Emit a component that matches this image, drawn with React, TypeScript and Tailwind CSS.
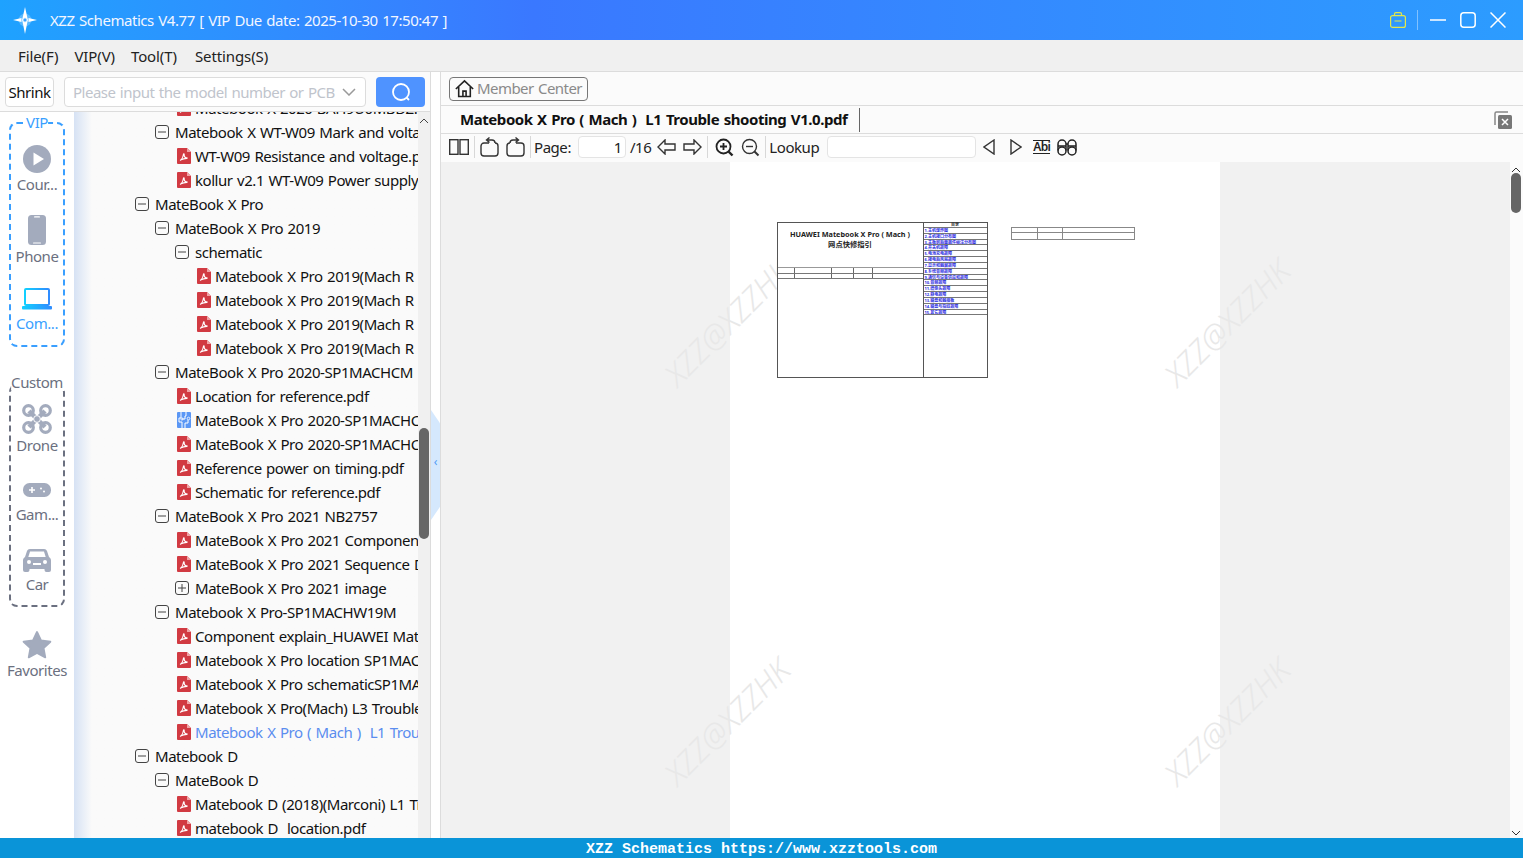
import type { ReactNode } from 'react'

const FONT = '[font-family:"Noto_Sans","Noto_Sans_CJK_SC",sans-serif]'

type TreeRow = {
  kind: 'minus' | 'plus' | 'pdf' | 'chip'
  indent: string
  label: string
  active?: boolean
}

// x offsets of the row icon, counted from the left edge of the tree
const L0 = 'pl-[61px]'
const L1 = 'pl-[81px]'
const L2 = 'pl-[101px]'
const F2 = 'pl-[103px]'
const F3 = 'pl-[123px]'

const rows: TreeRow[] = [
  { kind: 'pdf', indent: F2, label: 'Matebook X 2020-BAH9U0MBDZ.pdf' },
  { kind: 'minus', indent: L1, label: 'Matebook X WT-W09 Mark and voltage' },
  { kind: 'pdf', indent: F2, label: 'WT-W09 Resistance and voltage.pdf' },
  { kind: 'pdf', indent: F2, label: 'kollur v2.1 WT-W09 Power supply sequence.pdf' },
  { kind: 'minus', indent: L0, label: 'MateBook X Pro' },
  { kind: 'minus', indent: L1, label: 'MateBook X Pro 2019' },
  { kind: 'minus', indent: L2, label: 'schematic' },
  { kind: 'pdf', indent: F3, label: 'Matebook X Pro 2019(Mach R' },
  { kind: 'pdf', indent: F3, label: 'Matebook X Pro 2019(Mach R' },
  { kind: 'pdf', indent: F3, label: 'Matebook X Pro 2019(Mach R' },
  { kind: 'pdf', indent: F3, label: 'Matebook X Pro 2019(Mach R' },
  { kind: 'minus', indent: L1, label: 'MateBook X Pro 2020-SP1MACHCM' },
  { kind: 'pdf', indent: F2, label: 'Location for reference.pdf' },
  { kind: 'chip', indent: F2, label: 'MateBook X Pro 2020-SP1MACHCM' },
  { kind: 'pdf', indent: F2, label: 'MateBook X Pro 2020-SP1MACHCM' },
  { kind: 'pdf', indent: F2, label: 'Reference power on timing.pdf' },
  { kind: 'pdf', indent: F2, label: 'Schematic for reference.pdf' },
  { kind: 'minus', indent: L1, label: 'MateBook X Pro 2021 NB2757' },
  { kind: 'pdf', indent: F2, label: 'MateBook X Pro 2021 Component' },
  { kind: 'pdf', indent: F2, label: 'MateBook X Pro 2021 Sequence Diagram' },
  { kind: 'plus', indent: L2, label: 'MateBook X Pro 2021 image' },
  { kind: 'minus', indent: L1, label: 'Matebook X Pro-SP1MACHW19M' },
  { kind: 'pdf', indent: F2, label: 'Component explain_HUAWEI Matebook' },
  { kind: 'pdf', indent: F2, label: 'Matebook X Pro location SP1MACH' },
  { kind: 'pdf', indent: F2, label: 'Matebook X Pro schematicSP1MACH' },
  { kind: 'pdf', indent: F2, label: 'Matebook X Pro(Mach) L3 Trouble shooting' },
  { kind: 'pdf', indent: F2, label: 'Matebook X Pro ( Mach )  L1 Trouble shooting', active: true },
  { kind: 'minus', indent: L0, label: 'Matebook D' },
  { kind: 'minus', indent: L1, label: 'MateBook D' },
  { kind: 'pdf', indent: F2, label: 'Matebook D (2018)(Marconi) L1 Trouble' },
  { kind: 'pdf', indent: F2, label: 'matebook D  location.pdf' },
]

const tocItems = [
  '1.主机爆炸图',
  '2.主机接口分布图',
  '3.主板前后面器件标注分布图',
  '4.开关机故障',
  '5.电池充电故障',
  '6.接电后风扇故障',
  '7.显示和触屏故障',
  '8.系统音频故障',
  '9.通信与设备供应和故障',
  '10.音频故障',
  '11.摄像头故障',
  '12.静电故障',
  '13.键盘和触摸板',
  '14.键盘与指纹故障',
  '15.其它故障',
]

function PdfIcon() {
  return (
    <svg width="14" height="16" viewBox="0 0 14 16" className="shrink-0">
      <path d="M1 0h9l4 4v11a1 1 0 0 1-1 1H1a1 1 0 0 1-1-1V1a1 1 0 0 1 1-1z" fill="#d13a42" />
      <path d="M10 0l4 4h-4z" fill="#f0a3a6" />
      <path
        d="M3 12.5c1.6-.8 2.8-3 3.4-6 .2-1 .9-.8.8.2-.2 1.7 1 3.1 3.4 3.4M3.4 12c2-1 4.3-1.7 6.9-1.6"
        fill="none"
        stroke="#fff"
        strokeWidth="1.1"
      />
    </svg>
  )
}

function ChipIcon() {
  return (
    <svg width="14" height="16" viewBox="0 0 14 16" className="shrink-0">
      <rect width="14" height="16" rx="1" fill="#5b97f5" />
      <path d="M4 0v6H2v4h3v6M9 0v4h-1v3H5M8 16v-5h3V8" fill="none" stroke="#fff" strokeWidth="1" />
      <circle cx="11.5" cy="6.5" r="1.3" fill="none" stroke="#fff" strokeWidth="0.8" />
      <circle cx="5" cy="7" r="1.1" fill="none" stroke="#fff" strokeWidth="0.8" />
    </svg>
  )
}

function BoxIcon({ plus }: { plus?: boolean }) {
  return (
    <svg width="14" height="14" viewBox="0 0 14 14" className="shrink-0">
      <rect x="0.5" y="0.5" width="13" height="13" rx="2.5" fill="none" stroke="#444" />
      <path d={plus ? 'M3 7h8M7 3v8' : 'M3 7h8'} stroke="#444" />
    </svg>
  )
}

function Row({ row }: { row: TreeRow }) {
  const isFile = row.kind === 'pdf' || row.kind === 'chip'
  return (
    <div className={`flex h-6 items-center ${row.indent}`}>
      {row.kind === 'pdf' && <PdfIcon />}
      {row.kind === 'chip' && <ChipIcon />}
      {row.kind === 'minus' && <BoxIcon />}
      {row.kind === 'plus' && <BoxIcon plus />}
      <span
        className={`whitespace-pre text-[15px] ${isFile ? 'ml-1' : 'ml-1.5'} ${row.active ? 'text-[#5b8def]' : 'text-[#111]'}`}
      >
        {row.label}
      </span>
    </div>
  )
}

function SideItem({ icon, label, active, wide }: { icon: ReactNode; label: string; active?: boolean; wide?: boolean }) {
  return (
    <div className={`flex h-[70px] flex-col items-center pt-[22px] ${wide ? 'w-[74px]' : 'w-[54px]'}`}>
      <div className="flex h-[30px] items-center justify-center">{icon}</div>
      <span className={`mt-[1px] whitespace-nowrap text-[15px] leading-5 ${active ? 'text-[#3a9fff]' : 'text-[#6b7080]'}`}>
        {label}
      </span>
    </div>
  )
}

const GRAY = '#a3abbd'

function Sidebar() {
  return (
    <div className="flex h-full w-[74px] shrink-0 flex-col items-center bg-white pt-[10px]">
      <div className="relative flex h-[225px] w-[56px] flex-col items-center rounded-lg border-2 border-dashed border-[#3a9fff]">
        <span className="absolute -top-[10px] left-1/2 -translate-x-1/2 bg-white text-[15px] leading-4 text-[#3a9fff]">
          VIP
        </span>
        <div className="-mt-[1px]">
          <SideItem
            label="Cour..."
            icon={
              <svg width="28" height="28" viewBox="0 0 28 28">
                <circle cx="14" cy="14" r="14" fill={GRAY} />
                <path d="M10.5 7.5l10.5 6.500-10.5 6.500z" fill="#fff" />
              </svg>
            }
          />
        </div>
        <SideItem
          label="Phone"
          icon={
            <svg width="18" height="30" viewBox="0 0 18 30">
              <rect width="18" height="30" rx="3.5" fill={GRAY} />
              <rect x="6" y="1.2" width="6" height="1.4" rx="0.7" fill="#fff" />
              <rect x="5" y="27.6" width="8" height="1" rx="0.5" fill="#fff" />
            </svg>
          }
        />
        <SideItem
          active
          label="Com..."
          icon={
            <svg width="32" height="22" viewBox="0 0 32 22">
              <defs>
                <linearGradient id="laptop" x1="0" x2="1" y1="0" y2="0">
                  <stop offset="0" stopColor="#12d0ff" />
                  <stop offset="1" stopColor="#2f8cff" />
                </linearGradient>
              </defs>
              <rect x="4" y="1" width="24" height="16" rx="1" fill="none" stroke="url(#laptop)" strokeWidth="2" />
              <rect x="1" y="18" width="30" height="3.500" rx="1" fill="url(#laptop)" />
            </svg>
          }
        />
      </div>
      <div className="relative mt-[37px] flex h-[223px] w-[56px] flex-col items-center rounded-lg border-2 border-dashed border-[#6b7080]">
        <span className="absolute -top-[12px] left-1/2 -translate-x-1/2 bg-white text-[15px] leading-4 text-[#6b7080]">
          Custom
        </span>
        <div className="-mt-[4px]">
          <SideItem
            label="Drone"
            icon={
              <svg width="30" height="30" viewBox="0 0 30 30">
                <g fill="none" stroke={GRAY}>
                  <path d="M7 7l16 16M23 7L7 23" strokeWidth="4.500" />
                  <circle cx="6.500" cy="6.500" r="4.800" strokeWidth="3.200" />
                  <circle cx="23.500" cy="6.500" r="4.800" strokeWidth="3.200" />
                  <circle cx="6.500" cy="23.500" r="4.800" strokeWidth="3.200" />
                  <circle cx="23.500" cy="23.500" r="4.800" strokeWidth="3.200" />
                </g>
                <circle cx="15" cy="15" r="3.400" fill={GRAY} stroke="#fff" strokeWidth="1" />
              </svg>
            }
          />
        </div>
        <div className="mt-[2px]">
          <SideItem
            label="Gam..."
            icon={
              <svg width="28" height="14" viewBox="0 0 28 14">
                <rect width="28" height="14" rx="6.500" fill={GRAY} />
                <path d="M6 7h6M9 4v6" stroke="#fff" strokeWidth="1.600" />
                <circle cx="18" cy="5.500" r="1" fill="#fff" />
                <circle cx="21" cy="8.500" r="1" fill="#fff" />
              </svg>
            }
          />
        </div>
        <SideItem
          label="Car"
          icon={
            <svg width="28" height="24" viewBox="0 0 28 24">
              <path
                d="M7 1h14c1.500 0 2.400.8 3 2l2 6c1.300.8 2 2 2 3.500V22a2 2 0 0 1-2 2h-2.500a2 2 0 0 1-2-2v-1H6.500v1a2 2 0 0 1-2 2H2a2 2 0 0 1-2-2v-9.500C0 11 .7 9.800 2 9l2-6c.6-1.200 1.500-2 3-2z"
                fill={GRAY}
              />
              <path d="M7 3.500h14l1.700 5.500H5.300z" fill="#fff" />
              <circle cx="6" cy="14" r="2" fill="#fff" />
              <circle cx="22" cy="14" r="2" fill="#fff" />
              <rect x="10" y="15" width="8" height="2" fill="#fff" />
            </svg>
          }
        />
      </div>
      <div className="mt-[2px]">
        <SideItem
          wide
          label="Favorites"
          icon={
            <svg width="30" height="28" viewBox="0 0 24 23">
              <path
                d="M12 .8l3.300 7 7.700 1-5.600 5.300 1.400 7.600-6.800-3.700-6.800 3.700 1.400-7.600L1 8.800l7.700-1z"
                fill={GRAY}
                stroke={GRAY}
                strokeLinejoin="round"
                strokeWidth="1.500"
              />
            </svg>
          }
        />
      </div>
    </div>
  )
}

function LeftPane() {
  return (
    <div className="flex w-[431px] shrink-0 flex-col border-r border-[#dcdcdc]">
      <div className="flex h-10 shrink-0 items-center border-b border-[#dcdcdc] bg-[#fbfbfb] pl-[5px]">
        <div className="flex h-[30px] w-[49px] items-center justify-center rounded border border-[#dcdcdc] bg-white pt-px text-[15px] text-[#111]">
          Shrink
        </div>
        <div className="ml-[10px] flex h-[30px] w-[302px] items-center justify-between rounded border border-[#dcdcdc] bg-white pl-2 pr-[9px]">
          <span className="whitespace-nowrap pt-px text-[15px] tracking-[-0.5px] text-[#c0c4cc]">Please input the model number or PCB</span>
          <svg width="14" height="8" viewBox="0 0 14 8">
            <path d="M1 1l6 6 6-6" fill="none" stroke="#9a9a9a" strokeWidth="1.500" />
          </svg>
        </div>
        <div className="ml-[10px] flex h-[30px] w-[49px] items-center justify-center rounded bg-[#4f93ff]">
          <svg width="20" height="20" viewBox="0 0 20 20">
            <circle cx="10" cy="10" r="8" fill="none" stroke="#fff" strokeWidth="1.800" />
            <path d="M15.500 15.500l2.500 2.500" stroke="#fff" strokeWidth="1.800" />
          </svg>
        </div>
      </div>
      <div className="flex min-h-0 flex-1">
        <Sidebar />
        <div className="relative min-w-0 flex-1 overflow-hidden bg-gradient-to-r from-[#d6e2f4] via-[#fafafa] via-[5%] to-[#fafafa]">
          <div className="mr-[12px] -mt-[16px] overflow-hidden">
            {rows.map((row, i) => (
              <Row key={i} row={row} />
            ))}
          </div>
          <div className="absolute bottom-0 right-0 top-0 w-3 bg-[#f0f0f0]">
            <svg width="10" height="6" viewBox="0 0 10 6" className="absolute left-[1px] top-[6px]">
              <path d="M1 5l4-4 4 4" fill="none" stroke="#444" />
            </svg>
            <div className="absolute left-[1px] top-[316px] h-[111px] w-[10px] rounded-full bg-[#666]" />
          </div>
        </div>
      </div>
    </div>
  )
}

function Splitter() {
  return (
    <div className="relative w-[10px] shrink-0 border-r border-[#dcdcdc] bg-white">
      <div className="absolute left-0 top-[338px] flex h-[110px] w-[9px] items-center justify-center bg-[#d5e8fd] pb-[6px] [clip-path:polygon(0_0,100%_12%,100%_88%,0_100%)]">
        <span className="text-[12px] leading-none text-[#4f9cf5]">‹</span>
      </div>
    </div>
  )
}

function Divider() {
  return <div className="mx-[5px] h-[22px] w-px bg-[#d8d8d8]" />
}

function PdfToolbar() {
  const s = { fill: 'none', stroke: '#333', strokeWidth: 1.4 }
  return (
    <div className="flex h-[28px] shrink-0 items-center bg-[#fbfbfb] pb-[2px] pl-[8px] text-[15px] text-[#222]">
      <svg width="20" height="16" viewBox="0 0 20 16">
        <rect x="0.700" y="0.700" width="8.300" height="14.600" {...s} />
        <rect x="11" y="0.700" width="8.300" height="14.600" {...s} />
      </svg>
      <Divider />
      <svg width="20" height="20" viewBox="0 0 20 20">
        <path d="M9 6H4a3 3 0 0 0-3 3v7a3 3 0 0 0 3 3h11a3 3 0 0 0 3-3V9a3 3 0 0 0-3-3" {...s} />
        <path d="M15 6c0-2-1-3-3-3H7M9.500.500L6.500 3l3 2.500" {...s} />
      </svg>
      <svg width="20" height="20" viewBox="0 0 20 20" className="ml-[5px]">
        <path d="M11 6h5a3 3 0 0 1 3 3v7a3 3 0 0 1-3 3H5a3 3 0 0 1-3-3V9a3 3 0 0 1 3-3" {...s} />
        <path d="M5 6c0-2 1-3 3-3h5M10.500.500l3 2.500-3 2.500" {...s} />
      </svg>
      <Divider />
      <span className="-ml-[2px]">Page:</span>
      <div className="ml-[7px] flex h-[22px] w-[48px] items-center justify-end rounded-sm border border-[#e4e4e4] bg-white pr-[3px]">
        1
      </div>
      <span className="ml-[4px]">/16</span>
      <svg width="19" height="16" viewBox="0 0 19 16" className="ml-[6px]">
        <path d="M8 1L1 8l7 7v-4h10V5H8z" {...s} />
      </svg>
      <svg width="19" height="16" viewBox="0 0 19 16" className="ml-[7px]">
        <path d="M11 1l7 7-7 7v-4H1V5h10z" {...s} />
      </svg>
      <Divider />
      <svg width="19" height="19" viewBox="0 0 19 19" className="ml-[2px]">
        <circle cx="8.500" cy="8.500" r="7" fill="none" stroke="#222" strokeWidth="1.800" />
        <path d="M13.500 13.500l4 4" stroke="#222" strokeWidth="2.400" />
        <path d="M5 8.500h7M8.500 5v7" stroke="#222" strokeWidth="1.800" />
      </svg>
      <svg width="19" height="19" viewBox="0 0 19 19" className="ml-[7px]">
        <circle cx="8.500" cy="8.500" r="7" {...s} />
        <path d="M13.500 13.500l4 4" {...s} strokeWidth={2} />
        <path d="M5 8.500h7" {...s} />
      </svg>
      <Divider />
      <span className="-ml-[2px]">Lookup</span>
      <div className="ml-[8px] h-[22px] w-[149px] rounded-sm border border-[#e4e4e4] bg-white" />
      <svg width="12" height="16" viewBox="0 0 12 16" className="ml-[7px]">
        <path d="M11 1L1 8l10 7z" {...s} />
      </svg>
      <svg width="12" height="16" viewBox="0 0 12 16" className="ml-[15px]">
        <path d="M1 1l10 7-10 7z" {...s} />
      </svg>
      <span className="ml-[11px] border-y border-[#222] text-[12px] font-semibold leading-[12px] tracking-[-0.6px] text-[#222]">
        Abi
      </span>
      <svg width="20" height="17" viewBox="0 0 20 17" className="ml-[7px]">
        <g fill="none" stroke="#222" strokeWidth="1.500">
          <path d="M1 11.500V5a4 4 0 0 1 8 0v6.500M11 11.500V5a4 4 0 0 1 8 0v6.500M9 5h2M1 7h8M11 7h8" />
          <circle cx="5" cy="12" r="4" />
          <circle cx="15" cy="12" r="4" />
        </g>
      </svg>
    </div>
  )
}

function Watermark({ pos }: { pos: string }) {
  return (
    <span
      className={`pointer-events-none absolute -rotate-45 whitespace-nowrap text-[31px] font-light italic leading-none tracking-normal text-[#e8e8e8] ${pos}`}
    >
      XZZ@XZZHK
    </span>
  )
}

function PageContent() {
  return (
    <div className="relative z-10 flex items-start gap-[23px] pl-[47px] pt-[60px]">
      <div className="flex h-[156px] w-[211px] border border-[#555] bg-white">
        <div className="flex w-[146px] flex-col border-r border-[#555]">
          <div className="h-[44px] pt-[6px] text-center text-[7.300px] font-bold leading-[10px] tracking-normal text-[#222] [word-spacing:0]">
            <div>HUAWEI Matebook X Pro ( Mach )</div>
            <div>网点快修指引</div>
          </div>
          <div className="flex h-[6px] border-t border-[#999]">
            <div className="w-[17px] border-r border-[#666]" />
            <div className="w-[37px] border-r border-[#666]" />
            <div className="w-[22px] border-r border-[#666]" />
            <div className="w-[19px] border-r border-[#666]" />
          </div>
          <div className="flex h-[6px] border-y border-[#777]">
            <div className="w-[17px] border-r border-[#666]" />
            <div className="w-[37px] border-r border-[#666]" />
            <div className="w-[22px] border-r border-[#666]" />
            <div className="w-[19px] border-r border-[#666]" />
          </div>
        </div>
        <div className="flex-1">
          <div className="h-[5px] border-b border-[#777] text-center text-[4px] font-bold leading-[4px] tracking-normal text-[#333]">目录</div>
          {tocItems.map(item => (
            <div
              key={item}
              className="h-[5.830px] overflow-hidden whitespace-nowrap border-b border-[#777] pl-px text-[4px] font-bold leading-[5px] tracking-normal text-[#2a2ae0]"
            >
              {item}
            </div>
          ))}
        </div>
      </div>
      <div className="mt-[5px] h-[13px] w-[124px] border border-[#888]">
        <div className="flex h-[5px] border-b border-[#888]">
          <div className="w-[26px] border-r border-[#888]" />
          <div className="w-[25px] border-r border-[#888]" />
        </div>
        <div className="flex h-[6px]">
          <div className="w-[26px] border-r border-[#888]" />
          <div className="w-[25px] border-r border-[#888]" />
        </div>
      </div>
    </div>
  )
}

function RightPane() {
  return (
    <div className="flex min-w-0 flex-1 flex-col bg-[#fbfbfb]">
      <div className="flex h-[34px] shrink-0 items-center border-b border-[#dcdcdc] pl-2">
        <div className="flex h-[24px] w-[139px] items-center rounded border border-[#777] pl-[5px] text-[15px] text-[#8a8a8a]">
          <svg width="19" height="19" viewBox="0 0 18 18" className="shrink-0">
            <path d="M.8 9.500L9 1.800l8.200 7.700M3.500 7.500v9h11v-9M7.500 16.500v-5h3v5" fill="none" stroke="#222" strokeWidth="1.500" />
          </svg>
          <span className="ml-[3px] whitespace-nowrap tracking-[-0.55px]">Member Center</span>
        </div>
      </div>
      <div className="flex h-[28px] shrink-0 items-center justify-between border-b border-[#dcdcdc]">
        <div className="flex h-full items-center">
          <span className="whitespace-pre pl-[19px] pr-3 text-[15px] font-bold tracking-[-0.44px] text-[#111]">
            Matebook X Pro ( Mach )  L1 Trouble shooting V1.0.pdf
          </span>
          <div className="h-6 w-px bg-[#666]" />
        </div>
        <svg width="18" height="18" viewBox="0 0 18 18" className="mr-[11px]">
          <path d="M14 1H2.500A1.500 1.500 0 0 0 1 2.500V14" fill="none" stroke="#888" strokeWidth="1.500" />
          <rect x="4" y="4" width="14" height="14" rx="1.500" fill="#777" />
          <path d="M8 8l6 6M14 8l-6 6" stroke="#fff" strokeWidth="1.500" />
        </svg>
      </div>
      <PdfToolbar />
      <div className="flex min-h-0 flex-1">
        <div className="relative flex min-w-0 flex-1 justify-center overflow-hidden bg-[#f1f1f1] pr-[2px]">
          <div className="h-full w-[490px] bg-white">
            <PageContent />
          </div>
          <Watermark pos="left-[205px] top-[145px]" />
          <Watermark pos="left-[705px] top-[145px]" />
          <Watermark pos="left-[205px] top-[544px]" />
          <Watermark pos="left-[705px] top-[544px]" />
        </div>
        <div className="relative w-[13px] shrink-0 bg-[#fbfbfb]">
          <svg width="10" height="6" viewBox="0 0 10 6" className="absolute left-[1px] top-[5px]">
            <path d="M1 5l4-4 4 4" fill="none" stroke="#333" />
          </svg>
          <div className="absolute left-[1px] top-[11px] h-[40px] w-[10px] rounded-full bg-[#666]" />
          <svg width="10" height="6" viewBox="0 0 10 6" className="absolute bottom-[2px] left-[1px]">
            <path d="M1 1l4 4 4-4" fill="none" stroke="#333" />
          </svg>
        </div>
      </div>
    </div>
  )
}

export default function App() {
  return (
    <div className={`flex h-[858px] w-[1523px] flex-col overflow-hidden bg-white tracking-[-0.45px] [word-spacing:1px] ${FONT}`}>
      <header className="flex h-10 shrink-0 items-center bg-gradient-to-r from-[#1ea2ff] via-[#3a78ff] via-[35%] to-[#2c9cff] pr-[17px] text-white">
        <svg width="26" height="32" viewBox="0 0 26 32" className="ml-[12px] shrink-0">
          <circle cx="13" cy="16" r="6.500" fill="#fff" opacity="0.25" />
          <path d="M13 3l2 9 .8 4-.8 4-2 10-2-10-.8-4 .8-4z" fill="#fff" />
          <path d="M1 16l8.500-2v4zM25 16l-8.500-2v4z" fill="#fff" />
          <circle cx="13" cy="16" r="2.200" fill="#3aa2ff" stroke="#fff" />
        </svg>
        <span className="ml-[12px] whitespace-nowrap text-[15px] text-[#f2f6ff]">
          XZZ Schematics V4.77 [ VIP Due date: 2025-10-30 17:50:47 ]
        </span>
        <div className="ml-auto flex items-center">
          <svg width="16" height="16" viewBox="0 0 16 16">
            <g fill="none" stroke="#e3e84a" strokeWidth="1.200">
              <rect x="0.600" y="3.600" width="14.800" height="11.800" rx="2" />
              <path d="M4.500 3.500V2a1.400 1.400 0 0 1 1.400-1.400h4.200A1.400 1.400 0 0 1 11.500 2v1.500M4.500 9h7" />
            </g>
          </svg>
          <div className="ml-[11px] mr-[12px] h-5 w-px bg-white/40" />
          <svg width="16" height="16" viewBox="0 0 16 16">
            <path d="M0 8h16" stroke="#fff" strokeWidth="1.500" />
          </svg>
          <svg width="16" height="16" viewBox="0 0 16 16" className="ml-[14px]">
            <rect x="0.800" y="0.800" width="14.400" height="14.400" rx="3" fill="none" stroke="#fff" strokeWidth="1.500" />
          </svg>
          <svg width="16" height="16" viewBox="0 0 16 16" className="ml-[14px]">
            <path d="M.5.500l15 15M15.500.500l-15 15" stroke="#fff" strokeWidth="1.500" />
          </svg>
        </div>
      </header>
      <nav className="flex h-8 shrink-0 items-center gap-4 border-b border-[#dcdcdc] bg-[#f0f0f0] pl-[18px] pt-[2px] text-[15px] tracking-[-0.1px] text-[#222]">
        <span>File(F)</span>
        <span>VIP(V)</span>
        <span>Tool(T)</span>
        <span className="ml-[2px]">Settings(S)</span>
      </nav>
      <main className="flex min-h-0 flex-1">
        <LeftPane />
        <Splitter />
        <RightPane />
      </main>
      <footer className="flex h-5 shrink-0 items-center justify-center bg-[#0a94d8] pt-[4px] font-['Liberation_Mono',monospace] text-[15px] font-bold tracking-normal text-white [word-spacing:0]">
        XZZ Schematics https://www.xzztools.com
      </footer>
    </div>
  )
}
